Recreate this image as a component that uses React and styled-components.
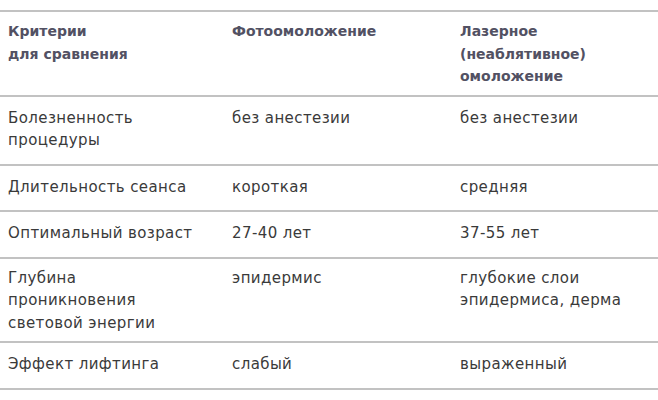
import styled, { createGlobalStyle } from "styled-components";

const Global = createGlobalStyle`
  html, body {
    margin: 0;
    padding: 0;
    background: #fff;
  }
  body {
    font-family: "DejaVu Sans", "Noto Sans", sans-serif;
  }
`;

const Page = styled.div`
  padding-top: 10px;
  width: 658px;
`;

const Table = styled.div`
  display: grid;
  grid-template-columns: 224px 228px 1fr;
  border-bottom: 2px solid #c2c2c2;
`;

const Cell = styled.div`
  border-top: 2px solid #c2c2c2;
  padding: ${({ $tight }) => ($tight ? "8px 8px 7px 8px" : "10px 8px 12px 8px")};
  font-size: ${({ $head }) => ($head ? "14px" : "15px")};
  line-height: 22.5px;
  font-weight: ${({ $head }) => ($head ? 700 : 400)};
  color: ${({ $head }) => ($head ? "#525163" : "#3a3a3a")};
  letter-spacing: ${({ $head }) => ($head ? "0" : "0.4px")};
`;

const head = [
  ["Критерии", "для сравнения"],
  ["Фотоомоложение"],
  ["Лазерное", "(неаблятивное)", "омоложение"],
];

const rows = [
  [["Болезненность", "процедуры"], ["без анестезии"], ["без анестезии"]],
  [["Длительность сеанса"], ["короткая"], ["средняя"]],
  [["Оптимальный возраст"], ["27-40 лет"], ["37-55 лет"]],
  [
    ["Глубина", "проникновения", "световой энергии"],
    ["эпидермис"],
    ["глубокие слои", "эпидермиса, дерма"],
  ],
  [["Эффект лифтинга"], ["слабый"], ["выраженный"]],
];

const Lines = ({ lines }) =>
  lines.map((l, i) => (
    <span key={i}>
      {l}
      {i < lines.length - 1 && <br />}
    </span>
  ));

export default function App() {
  return (
    <>
      <Global />
      <Page>
        <Table>
          {head.map((c, i) => (
            <Cell $head $tight key={"h" + i}>
              <Lines lines={c} />
            </Cell>
          ))}
          {rows.map((r, ri) => {
            const tight = Math.max(...r.map((c) => c.length)) > 2;
            return r.map((c, ci) => (
              <Cell $tight={tight} key={ri + "-" + ci}>
                <Lines lines={c} />
              </Cell>
            ));
          })}
        </Table>
      </Page>
    </>
  );
}
